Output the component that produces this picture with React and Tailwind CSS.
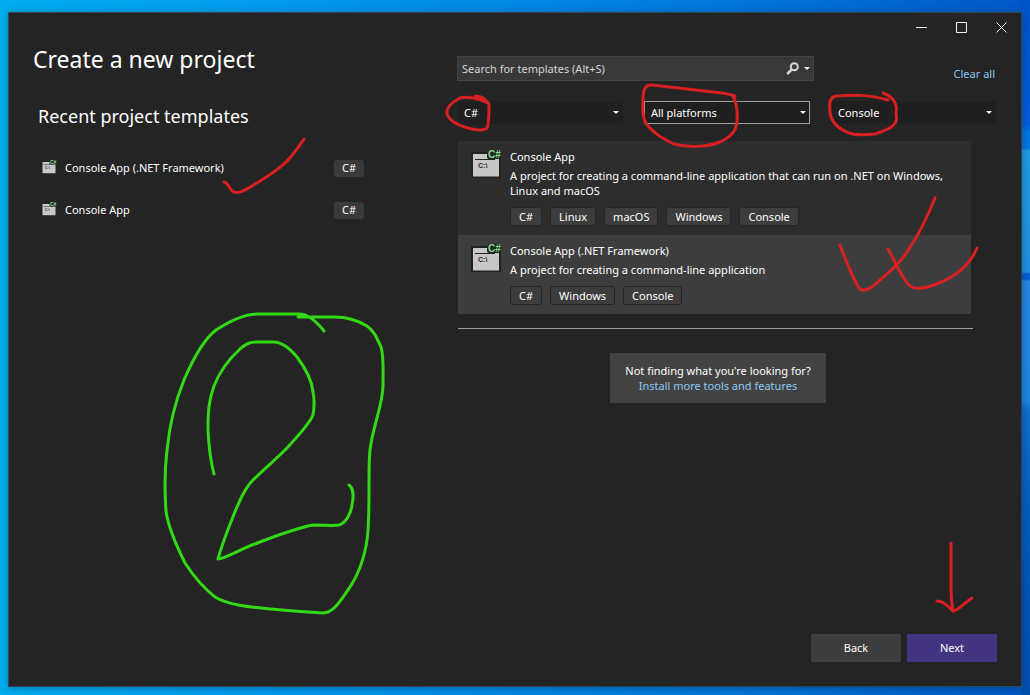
import React from "react";

const RED = "#d81f22";

function ConsoleIcon({ className }) {
  return (
    <svg viewBox="0 0 32 28" overflow="visible" className={className} aria-hidden="true">
      <path d="M1 2h30v26H1z" fill="#222222" />
      <path d="M3 4h26v22.500H3z" fill="#c8c8c8" />
      <path d="M5 9h20v1H5z" fill="#222222" />
      <path d="M19 0h10q2 0 2 2v5q0 2-2 2H19q-2 0-2-2V2q0-2 2-2z" fill="#1a2a1a" />
      <text x="8" y="18" fontSize="7" fontWeight="700" fontFamily="'Liberation Sans', sans-serif" fill="#1e1e1e">C:\</text>
      <text x="18" y="8" fontSize="10" fontWeight="700" fontFamily="'Liberation Sans', sans-serif" fill="#8fd694">C#</text>
    </svg>
  );
}

function Caret() {
  return (
    <svg viewBox="0 0 6 3" className="h-[3px] w-1.5 shrink-0" aria-hidden="true">
      <path d="M0 0h6L3 3z" fill="#f1f1f1" />
    </svg>
  );
}

function Filter({ label, value, options, active }) {
  return (
    <div className="grid items-center">
      <select
        aria-label={label}
        defaultValue={value}
        className={
          "col-start-1 row-start-1 h-[23px] w-full appearance-none rounded-none border bg-[#1f1f1f] px-1.5 text-white outline-none " +
          (active ? "border-[#a0a0a0]" : "border-[#1f1f1f]")
        }
      >
        {options.map((o) => (
          <option key={o}>{o}</option>
        ))}
      </select>
      <span className="pointer-events-none col-start-1 row-start-1 justify-self-end pr-1">
        <Caret />
      </span>
    </div>
  );
}

const recent = ["Console App (.NET Framework)", "Console App"];

const templates = [
  {
    name: "Console App",
    text: "A project for creating a command-line application that can run on .NET on Windows, Linux and macOS",
    tags: ["C#", "Linux", "macOS", "Windows", "Console"],
    row: "bg-[#2d2d2d]",
  },
  {
    name: "Console App (.NET Framework)",
    text: "A project for creating a command-line application",
    tags: ["C#", "Windows", "Console"],
    row: "bg-[#3d3d3d]",
  },
];

function Ink() {
  return (
    <svg
      viewBox="0 0 1030 695"
      className="pointer-events-none absolute left-0 top-0 h-[695px] w-[1030px]"
      fill="none"
      strokeWidth="3"
      strokeLinecap="round"
      strokeLinejoin="round"
      aria-hidden="true"
    >
      <g stroke={RED}>
        <path d="M224 182C228 182 230 191 234 192C240 194 247 189 257 183C268 176 281 168 288 160C294 154 299 146 304 139" />
        <path d="M475 96C481 96 484 98 488 103C478 98 466 96 460 98C452 102 446 108 447 114C449 120 457 125 468 128C474 130 484 131 487 128C489 124 489 111 489 105C488 101 484 99 479 97" />
        <path d="M735 96C729 94 727 94 722 93L652 85C645 84 643 90 643 100C642 112 643 121 648 126C655 134 665 140 674 144C686 147 705 148 720 142C731 137 737 130 737 121C738 111 736 102 733 96" />
        <path d="M883 93C893 97 898 103 896 114C899 124 891 129 875 134C866 135 857 136 849 133C839 129 831 122 830 112C829 102 830 97 836 96C850 95 868 94 888 100" />
        <path d="M840 245C846 261 854 280 859 288C863 293 871 289 880 280C893 269 904 259 912 244C921 231 928 215 935 198" />
        <path d="M888 249C896 263 902 278 909 285C915 291 927 288 939 283C954 277 969 267 977 248" />
        <path d="M951 543C951 560 951 580 951 590C951 600 952 605 953 611" />
        <path d="M937 601C943 601 948 606 953 611C958 611 964 603 972 598" />
      </g>
      <g stroke="#32d914">
        <path d="M324 331C317 322 309 314 299 314H258C245 314 230 321 216 330C203 340 193 359 184 380C175 402 169 430 167 450C164 475 165 497 166 511C168 526 176 545 185 563C194 577 205 589 215 597C228 605 250 607 271 609C290 611 306 612 323 613C333 613 340 602 350 587C360 572 367 550 368 530C370 500 368 470 370 450C373 425 383 405 383 385C383 370 384 357 381 347C376 336 373 330 367 326C357 320 345 317 335 317H298" />
        <path d="M214 474C211 463 209 450 208 430C208 410 209 400 214 386C219 373 229 359 240 349C247 343 250 342 257 342H273C283 342 290 349 297 357C306 369 312 380 313 392C315 401 314 409 313 415C309 425 296 438 285 450C275 460 262 471 253 480C245 488 240 500 234 514C229 527 222 544 218 559C225 559 240 549 260 542C278 535 298 528 313 525C325 525 333 526 339 525C346 523 351 513 352 505C354 496 353 488 349 485" />
      </g>
    </svg>
  );
}

export default function App() {
  return (
    <div className="relative flex min-h-screen flex-col bg-[linear-gradient(90deg,#00adef_0%,#009bf0_25%,#0078dc_70%,#0058c8_100%)] font-['Noto_Sans','Open_Sans',sans-serif] text-[11px] leading-4 text-white">
      <div className="flex grow flex-col bg-[linear-gradient(180deg,#0054c8_0px,#005edc_125px,#0078e4_132px,#0078e4_148px,#1f9ce4_151px,#1f90e0_272px,#0060d4_274px,#0060d4_279px,#2288e0_281px,#1c88e0_400px,#0a70c8_410px,#0058b8_560px,#0050b0_100%)] bg-[length:9px_100%] bg-right bg-no-repeat pb-2 pl-2 pr-2 pt-3">
        <main className="flex grow flex-col border border-[#2f4858] bg-[#242424] shadow-[0_1px_8px_rgba(0,0,0,0.3)]">
          <div className="flex grow">
            <section className="w-[448px] shrink-0 pl-6 pt-[29px]">
              <h1 className="text-[23px] leading-[34px]">Create a new project</h1>
              <h2 className="mt-[25px] pl-[5px] text-lg leading-[30px]">Recent project templates</h2>
              <ul className="mt-4 pl-2">
                {recent.map((name) => (
                  <li key={name} className="flex h-[42px] items-center">
                    <ConsoleIcon className="mb-0.5 h-3.5 w-4" />
                    <a href="#template" className="ml-2 w-[269px]">{name}</a>
                    <span className="flex h-[17px] w-[30px] items-center justify-center rounded-[3px] bg-[#3a3a3a]">C#</span>
                  </li>
                ))}
              </ul>
            </section>

            <section className="min-w-0 grow">
              <div className="flex h-7 items-center justify-end">
                <button aria-label="Minimize" className="flex w-10 justify-center">
                  <svg width="11" height="11" viewBox="0 0 11 11" stroke="#f1f1f1"><path d="M0 5.500h11" /></svg>
                </button>
                <button aria-label="Maximize" className="flex w-10 justify-center">
                  <svg width="11" height="11" viewBox="0 0 11 11" fill="none" stroke="#f1f1f1"><path d="M.5.5h10v10H.5z" /></svg>
                </button>
                <button aria-label="Close" className="flex w-10 justify-center">
                  <svg width="11" height="11" viewBox="0 0 11 11" stroke="#f1f1f1"><path d="M.5.5l10 10M10.500.5l-10 10" /></svg>
                </button>
              </div>
              <div className="mt-[15px] flex items-start justify-between pr-[26px]">
                <div className="flex h-[25px] w-[357px] items-center border border-[#434343] bg-[#383838] pr-[3px]">
                  <input
                    aria-label="Search for templates"
                    placeholder="Search for templates (Alt+S)"
                    className="h-full min-w-0 grow bg-transparent pl-1 outline-none placeholder:text-[#d6d6d6]"
                  />
                  <svg width="13" height="13" viewBox="0 0 13 13" fill="none" stroke="#d6d6d6" className="mr-[5px]" aria-hidden="true">
                    <circle cx="8.300" cy="4.700" r="3.500" strokeWidth="2" />
                    <path d="M6 7.200L1.200 12" strokeWidth="2.600" />
                  </svg>
                  <Caret />
                </div>
                <a href="#clear" className="mt-2.5 text-[#8cc8f5]">Clear all</a>
              </div>
              <div className="mt-[19px] grid grid-cols-[166px_166px_165px] justify-between pr-[25px]">
                <Filter label="Language" value="C#" options={["C#", "All languages"]} />
                <Filter label="Platform" value="All platforms" options={["All platforms", "Windows"]} active />
                <Filter label="Project type" value="Console" options={["Console", "All project types"]} />
              </div>
              <div className="ml-px mr-12 mt-[17px] border-b border-[#a0a0a0] pb-3.5">
                <ul className="mr-0.5">
                  {templates.map((t) => (
                    <li key={t.name} className={"flex pb-[9px] pl-3 pt-2 " + t.row}>
                      <ConsoleIcon className="mt-px h-7 w-8 shrink-0" />
                      <div className="ml-2 min-w-0 grow">
                        <h3>{t.name}</h3>
                        <p className="mt-[3px] pr-3 leading-[15px]">{t.text}</p>
                        <div className="mt-[9px] flex gap-2">
                          {t.tags.map((tag) => (
                            <span key={tag} className="flex h-[19px] items-center rounded-[3px] border border-[#252525] bg-[#3d3d3d] px-2">{tag}</span>
                          ))}
                        </div>
                      </div>
                    </li>
                  ))}
                </ul>
              </div>
              <div className="ml-[153px] mt-6 w-[216px] bg-[#424242] py-2.5 text-center leading-[15px]">
                <p>Not finding what you're looking for?</p>
                <a href="#install" className="text-[#8cc8f5]">Install more tools and features</a>
              </div>
            </section>
          </div>
          <footer className="flex justify-end gap-1.5 pb-6 pr-6">
            <button className="h-7 w-[90px] bg-[#3d3d3d]">Back</button>
            <button className="h-7 w-[90px] bg-[#433481]">Next</button>
          </footer>
        </main>
      </div>
      <Ink />
    </div>
  );
}
